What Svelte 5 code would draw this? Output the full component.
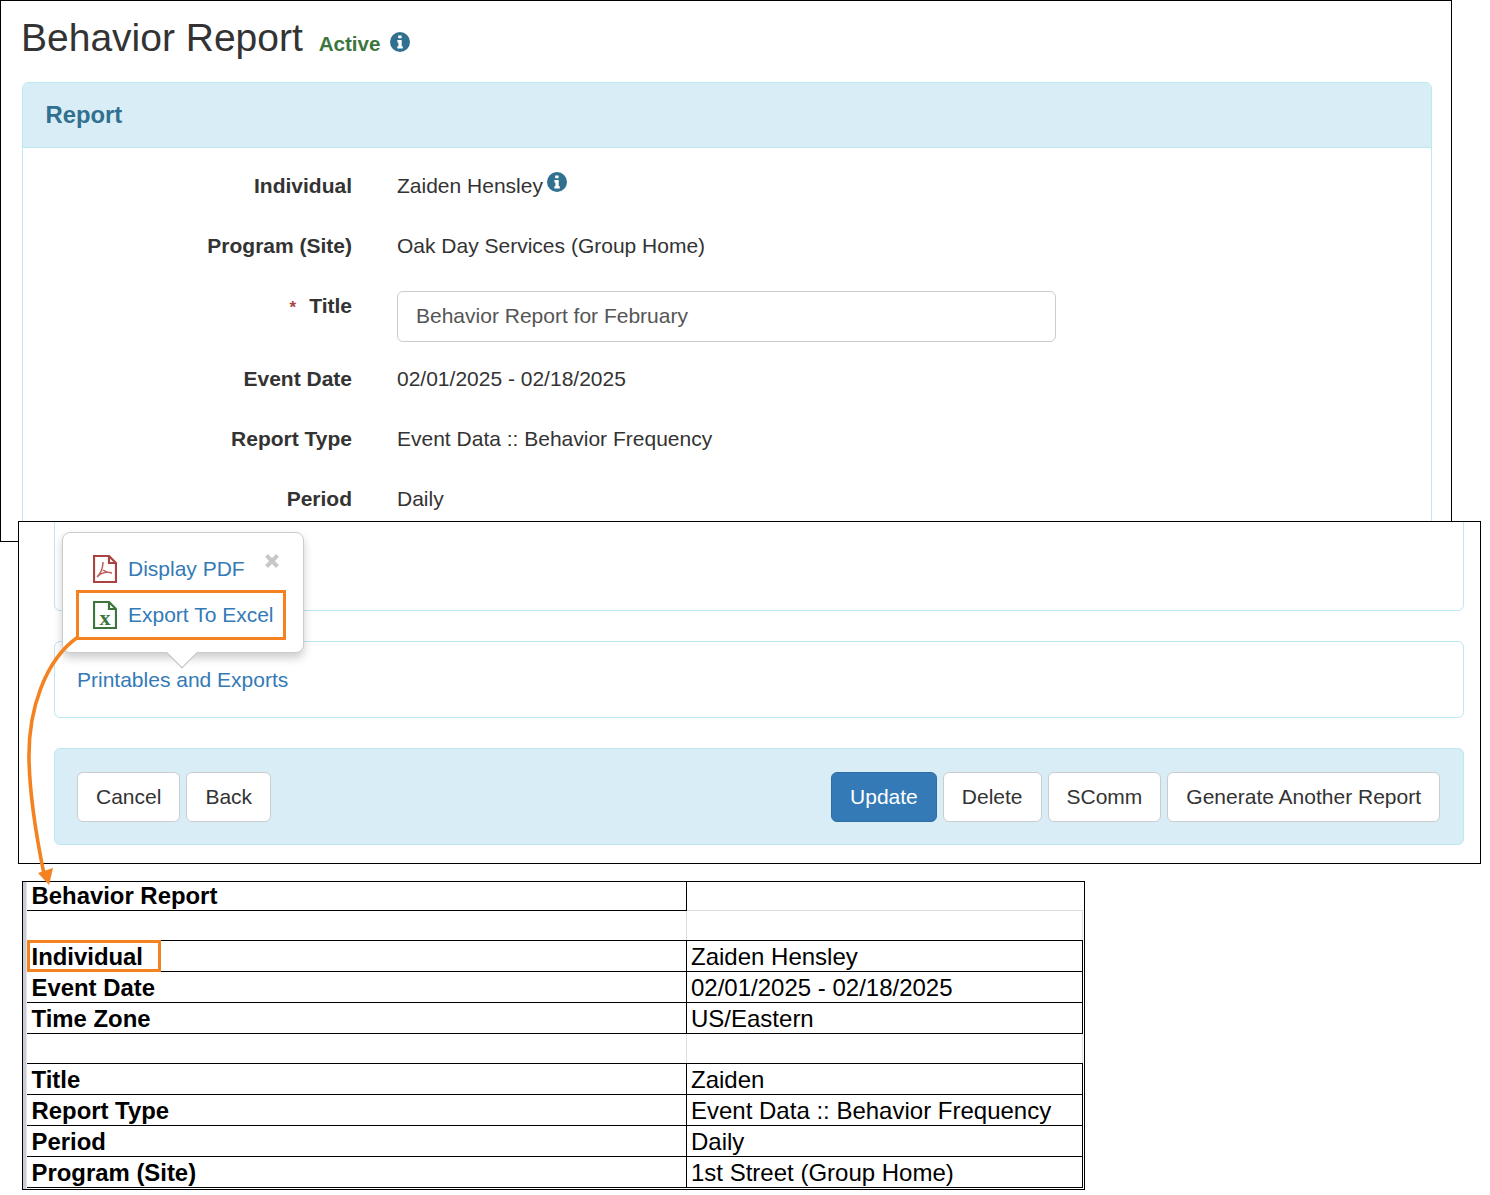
<script>
  const fields = [
    { label: 'Individual', value: 'Zaiden Hensley', info: true },
    { label: 'Program (Site)', value: 'Oak Day Services (Group Home)' },
    { label: 'Title', input: 'Behavior Report for February', required: true },
    { label: 'Event Date', value: '02/01/2025 - 02/18/2025' },
    { label: 'Report Type', value: 'Event Data :: Behavior Frequency' },
    { label: 'Period', value: 'Daily' }
  ];

  // null marks the blank spacer rows of the sheet
  const sheet = [
    { h: 28, label: 'Behavior Report', value: '', head: true },
    null,
    { h: 31, label: 'Individual', value: 'Zaiden Hensley', mark: true },
    { h: 31, label: 'Event Date', value: '02/01/2025 - 02/18/2025' },
    { h: 31, label: 'Time Zone', value: 'US/Eastern' },
    null,
    { h: 31, label: 'Title', value: 'Zaiden' },
    { h: 31, label: 'Report Type', value: 'Event Data :: Behavior Frequency' },
    { h: 31, label: 'Period', value: 'Daily' },
    { h: 31, label: 'Program (Site)', value: '1st Street (Group Home)' }
  ];
</script>

{#snippet infoIcon(cls)}
  <svg class={cls} viewBox="0 0 20 20" aria-hidden="true">
    <circle cx="10" cy="10" r="10" fill="#31708f" />
    <path d="M8.2 3.4h3.4v2.8H8.2zM7.4 8h4.3v6.2h1.1v2.4H7.3v-2.4h1.1v-3.8h-1z" fill="#fff" />
  </svg>
{/snippet}

<div class="canvas">
  <section class="shot shot-form">
    <h1>Behavior Report <span class="status">Active</span>{@render infoIcon('info info-head')}</h1>
    <div class="panel">
      <h2 class="panel-head">Report</h2>
      <div class="form">
        {#each fields as f}
          <div class="row" class:row-input={f.input}>
            <div class="label">
              {#if f.required}<span class="req">*</span>{/if}{f.label}
            </div>
            {#if f.input}
              <div class="input">{f.input}</div>
            {:else}
              <div class="value">{f.value}{#if f.info}{@render infoIcon('info info-inline')}{/if}</div>
            {/if}
          </div>
        {/each}
      </div>
    </div>
  </section>

  <section class="shot shot-actions">
    <div class="panel panel-cut"></div>
    <div class="panel panel-link"><span class="link">Printables and Exports</span></div>
    <div class="panel panel-foot">
      <div class="btns">
        <button>Cancel</button>
        <button>Back</button>
      </div>
      <div class="btns">
        <button class="primary">Update</button>
        <button>Delete</button>
        <button>SComm</button>
        <button>Generate Another Report</button>
      </div>
    </div>

    <div class="popover">
      <svg class="close" viewBox="0 0 16 16" aria-hidden="true">
        <path d="M2.5 2.5l11 11M13.5 2.5l-11 11" stroke="#c8c8c8" stroke-width="4" fill="none" />
      </svg>
      <div class="pop-item">
        <svg class="doc" viewBox="0 0 24 28" aria-hidden="true">
          <path d="M1 1h15l7 7v19H1z M16 1v7h7" fill="#fff" stroke="#a94442" stroke-width="2.2" />
          <path d="M10 7c0 5-2 11-6 15M10 15c3 2 6 3 9 3M4 22c3-3 8-6 15-4" fill="none" stroke="#c0605a" stroke-width="1.5" />
        </svg>
        <span class="link">Display PDF</span>
      </div>
      <div class="pop-item">
        <svg class="doc" viewBox="0 0 24 28" aria-hidden="true">
          <path d="M1 1h15l7 7v19H1z M16 1v7h7" fill="#fff" stroke="#3c763d" stroke-width="2.2" />
          <text x="12" y="24" text-anchor="middle" class="doc-x">x</text>
        </svg>
        <span class="link">Export To Excel</span>
      </div>
      <div class="pop-tip"></div>
    </div>
  </section>

  <section class="sheet">
    <table>
      <colgroup><col class="col-a" /><col /></colgroup>
      <tbody>
        {#each sheet as r}
          {#if r}
            <tr style="height: {r.h}px">
              <td class="key">{r.label}</td>
              <td class:open={r.head}>{r.value}</td>
            </tr>
          {:else}
            <tr class="blank"><td></td><td></td></tr>
          {/if}
        {/each}
      </tbody>
    </table>
  </section>

  <div class="callout callout-export"></div>
  <div class="callout callout-cell"></div>
  <svg class="arrow" viewBox="0 0 100 270" aria-hidden="true">
    <path d="M58 4C25 27 8 77 9 127c1 40 8 80 15 114" fill="none" stroke="#f58220" stroke-width="3.6" />
    <path d="M18 240l15-5-4 17z" fill="#f58220" />
  </svg>
</div>

<style>
  :global(body) {
    margin: 0;
    background: #fff;
  }

  .canvas {
    position: relative;
    width: 1490px;
    height: 1195px;
    overflow: hidden;
    font-family: "Liberation Sans", Arial, sans-serif;
    font-size: 21px;
    color: #333;
  }

  .shot {
    position: absolute;
    box-sizing: border-box;
    background: #fff;
    border: 1px solid #000;
    overflow: hidden;
  }

  .shot-form {
    left: 0;
    top: 0;
    width: 1452px;
    height: 542px;
    padding: 0 19px 0 21px;
  }

  h1 {
    margin: 0 0 0 -1px;
    height: 81px;
    padding-top: 14px;
    box-sizing: border-box;
    font-size: 39px;
    line-height: 46px;
    font-weight: 400;
    white-space: nowrap;
  }

  .status {
    margin-left: 5px;
    font-size: 20.6px;
    font-weight: 700;
    color: #3c763d;
  }

  .info {
    display: inline-block;
    width: 20px;
    height: 20px;
  }

  .info-head {
    margin-left: 10px;
    vertical-align: -1px;
  }

  .info-inline {
    margin-left: 4px;
    vertical-align: 1px;
  }

  .panel {
    box-sizing: border-box;
    border: 1px solid #bce8f1;
    border-radius: 6px;
    background: #fff;
  }

  .panel-head {
    margin: 0;
    height: 65px;
    padding-left: 22.5px;
    background: #d9edf7;
    border-bottom: 1px solid #bce8f1;
    box-sizing: border-box;
    border-radius: 5px 5px 0 0;
    font-size: 23.8px;
    line-height: 64px;
    font-weight: 700;
    color: #31708f;
  }

  .form {
    padding-top: 23px;
  }

  .row {
    display: grid;
    grid-template-columns: 329px 1fr;
    column-gap: 45px;
    line-height: 30px;
    margin-bottom: 30px;
  }

  .row-input {
    margin-bottom: 22px;
  }

  .label {
    text-align: right;
    font-weight: 700;
    position: relative;
  }

  .req {
    color: #a94442;
    margin-right: 13px;
    font-size: 17px;
  }

  .input {
    box-sizing: border-box;
    width: 659px;
    height: 51px;
    padding: 9px 18px;
    border: 1px solid #ccc;
    border-radius: 6px;
    color: #555;
  }

  .shot-actions {
    left: 18px;
    top: 521px;
    width: 1463px;
    height: 343px;
    padding: 0 16px 0 35px;
  }

  .panel-cut {
    height: 99px;
    margin-top: -10px;
  }

  .panel-link {
    height: 77px;
    margin-top: 30px;
    padding: 23px 22px 0;
    line-height: 30px;
  }

  .link {
    color: #337ab7;
  }

  .panel-foot {
    height: 97px;
    margin-top: 30px;
    padding: 23px 23px 0 22px;
    display: flex;
    justify-content: space-between;
    background: #d9edf7;
  }

  .btns {
    display: flex;
    gap: 6px;
  }

  button {
    box-sizing: border-box;
    height: 50px;
    padding: 0 18px;
    font: inherit;
    color: #333;
    background: #fff;
    border: 1px solid #ccc;
    border-radius: 6px;
    white-space: nowrap;
  }

  button.primary {
    color: #fff;
    background: #337ab7;
    border-color: #2e6da4;
  }

  .popover {
    position: absolute;
    left: 43px;
    top: 10px;
    box-sizing: border-box;
    width: 242px;
    height: 121px;
    padding: 13px 0 0 30px;
    background: #fff;
    border: 1px solid #ccc;
    border-radius: 8px;
    box-shadow: 0 5px 10px rgba(0, 0, 0, 0.2);
  }

  .close {
    position: absolute;
    right: 23px;
    top: 20px;
    width: 16px;
    height: 16px;
  }

  .pop-item {
    display: flex;
    align-items: center;
    gap: 11px;
    height: 46px;
    white-space: nowrap;
  }

  .doc {
    width: 24px;
    height: 28px;
    flex: none;
  }

  .doc-x {
    font-family: "Liberation Serif", serif;
    font-weight: 700;
    font-size: 22px;
    fill: #3c763d;
  }

  .pop-tip {
    position: absolute;
    left: 108px;
    bottom: -12px;
    width: 22px;
    height: 22px;
    box-sizing: border-box;
    background: #fff;
    border-right: 1px solid #bbb;
    border-bottom: 1px solid #bbb;
    transform: rotate(45deg);
  }

  .sheet {
    position: absolute;
    left: 22px;
    top: 881px;
    box-sizing: border-box;
    width: 1063px;
    height: 309px;
    padding: 0 1px 0 3.5px;
    border: 1px solid #000;
    background: linear-gradient(#c8ccd4, #c8ccd4) left / 3.5px 100% no-repeat;
    color: #000;
    font-size: 24px;
  }

  table {
    width: 1056px;
    table-layout: fixed;
    border-collapse: collapse;
  }

  .col-a {
    width: 660px;
  }

  td {
    padding: 2px 0 0 4px;
    box-sizing: border-box;
    border: 1px solid #000;
    line-height: 26px;
    white-space: nowrap;
    overflow: hidden;
  }

  tr:first-child td {
    border-top: none;
    padding-top: 0;
  }

  td:first-child {
    border-left: none;
  }

  td.key {
    padding-left: 5px;
    font-size: 23.9px;
    font-weight: 700;
  }

  td.open {
    border-bottom-color: #ddd;
    border-right-color: #fff;
  }

  .blank {
    height: 30px;
  }

  .blank td {
    border-left-color: #ddd;
    border-right-color: #ddd;
  }

  tr:first-child + .blank td + td {
    border-top-color: #ddd;
  }

  .callout {
    position: absolute;
    box-sizing: border-box;
    border: 3px solid #f58220;
  }

  .callout-export {
    left: 76px;
    top: 590px;
    width: 210px;
    height: 50px;
  }

  .callout-cell {
    left: 27px;
    top: 940px;
    width: 134px;
    height: 32px;
  }

  .arrow {
    position: absolute;
    left: 20px;
    top: 633px;
    width: 100px;
    height: 270px;
  }
</style>
